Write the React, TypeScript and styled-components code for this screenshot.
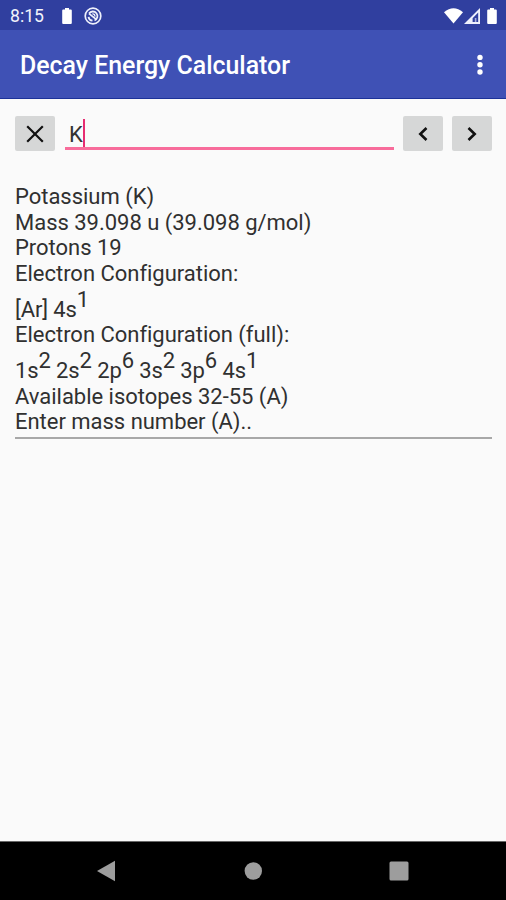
import React from "react";
import styled, { createGlobalStyle } from "styled-components";

const GlobalStyle = createGlobalStyle`
  * { box-sizing: border-box; }
  body { margin: 0; background: #fafafa; font-family: Roboto, "Noto Sans", sans-serif; }
`;

const Screen = styled.div`
  width: 506px;
  height: 900px;
  display: flex;
  flex-direction: column;
  overflow: hidden;
  background: #fafafa;
`;

const StatusBar = styled.header`
  height: 30px;
  flex: none;
  display: flex;
  align-items: center;
  padding: 1px 9px 0 10px;
  background: #303f9f;
  color: #f2f3fb;
`;

const Clock = styled.span`
  width: 52px;
  font-size: 17.6px;
  line-height: 20px;
  padding-top: 1px;
`;

const StatusIcon = styled.svg<{ $gap?: number }>`
  flex: none;
  display: block;
  margin-left: ${(p) => p.$gap ?? 0}px;
`;

const Spacer = styled.div`
  flex: 1;
`;

const AppBar = styled.div`
  height: 69px;
  flex: none;
  display: flex;
  align-items: center;
  justify-content: space-between;
  padding: 0 22px 0 20px;
  background: #3f51b5;
  border-bottom: 1px solid #1c3299;
`;

const Title = styled.h1`
  margin: 4px 0 0;
  color: #fff;
  font-size: 24.9px;
  font-weight: 500;
  line-height: 30px;
  white-space: nowrap;
`;

const MenuButton = styled.button`
  width: 8px;
  height: 24px;
  margin-top: 1px;
  padding: 0;
  border: 0;
  background: none;
`;

const Content = styled.main`
  flex: 1;
  padding: 17px 14px 0 15px;
`;

const SearchRow = styled.div`
  display: flex;
  align-items: flex-start;
`;

const SquareButton = styled.button`
  width: 40px;
  height: 35px;
  flex: none;
  display: grid;
  place-items: center;
  padding: 0;
  border: 0;
  border-radius: 2px;
  background: #d6d7d7;
`;

const Field = styled.div`
  flex: 1;
  height: 34px;
  margin: 0 9px 0 10px;
  padding: 3px 0 0 4px;
  display: flex;
  border-bottom: 3px solid #f86c9b;
  color: #333;
  font-size: 22px;
  line-height: 32px;
`;

const Caret = styled.span`
  width: 2px;
  height: 28px;
  background: #e72d72;
`;

const Pager = styled.div`
  display: flex;
  gap: 9px;
`;

const Report = styled.section`
  margin-top: 32px;
  height: 256px;
  padding-top: 1px;
  border-bottom: 2px solid #a8a8a8;
  color: #303030;
  font-size: 22px;
`;

const Line = styled.div<{ $raised?: boolean }>`
  height: ${(p) => (p.$raised ? 35.6 : 25.7)}px;
  padding-top: ${(p) => (p.$raised ? 9.8 : 0)}px;
  letter-spacing: ${(p) => (p.$raised ? -0.12 : -0.02)}px;
  line-height: 25.7px;
  white-space: nowrap;
`;

const Sup = styled.sup`
  position: relative;
  top: -10px;
  vertical-align: baseline;
  font-size: 22px;
  line-height: 0;
`;

const NavBar = styled.footer`
  height: 59px;
  flex: none;
  display: grid;
  grid-template-columns: 34px 146px 146px 146px 34px;
  align-items: center;
  justify-items: center;
  background: #000;
  border-top: 1px solid #686868;
  & > svg:first-child { grid-column: 2; }
`;

const Orbital = ({ name, count }: { name: string; count: number }) => (
  <>
    {name}
    <Sup>{count}</Sup>
  </>
);

const orbitals: [string, number][] = [
  ["1s", 2], ["2s", 2], ["2p", 6], ["3s", 2], ["3p", 6], ["4s", 1],
];

const Battery = ({ gap }: { gap?: number }) => (
  <StatusIcon $gap={gap} width="10" height="16" viewBox="0 0 10 16">
    <path d="M3 0h4v1.5h1.8q1 0 1 1V15q0 1-1 1H1.2q-1 0-1-1V2.5q0-1 1-1H3z" fill="#fff" />
  </StatusIcon>
);

export default function App() {
  return (
    <>
      <GlobalStyle />
      <Screen>
        <StatusBar>
          <Clock>8:15</Clock>
          <Battery />
          <StatusIcon $gap={12} width="18" height="18" viewBox="0 0 18 18" fill="none" stroke="#eef0fb">
            <circle cx="9" cy="9" r="7.8" strokeWidth="1.7" />
            <path d="M5 6.6A4.6 4.6 0 1 1 10.5 13.4M4.5 9.8a4.6 4.6 0 0 0 4 3.9M5 6.6l7.6 6" strokeWidth="1.8" />
            <path d="M8.3 6.9q2.8-.3 2.6 2.7" strokeWidth="1.4" />
          </StatusIcon>
          <Spacer />
          <StatusIcon width="19" height="16" viewBox="0 0 19 16">
            <path d="M0 4.2Q9.5-3.5 19 4.2L9.5 15.5z" fill="#fff" />
          </StatusIcon>
          <StatusIcon $gap={1} width="16" height="16" viewBox="0 0 16 16">
            <path fillRule="evenodd" d="M16 0v16H0zM14.2 4.5L8.6 10.2V14h5.6z" fill="#eef0fc" />
            <path d="M10.8 10h1.6v4h-1.6z" fill="#a7afdc" />
          </StatusIcon>
          <Battery gap={7} />
        </StatusBar>
        <AppBar>
          <Title>Decay Energy Calculator</Title>
          <MenuButton aria-label="More options">
            <svg width="8" height="24" viewBox="0 0 8 24" fill="#fff" display="block">
              <circle cx="4" cy="4.4" r="2.7" />
              <circle cx="4" cy="11.7" r="2.7" />
              <circle cx="4" cy="19" r="2.7" />
            </svg>
          </MenuButton>
        </AppBar>
        <Content>
          <SearchRow>
            <SquareButton aria-label="Clear">
              <svg width="18" height="18" viewBox="0 0 18 18" fill="none" stroke="#111" strokeWidth="2.2">
                <path d="M1.2 1.2l15.6 15.6M16.8 1.2L1.2 16.8" />
              </svg>
            </SquareButton>
            <Field>
              K<Caret />
            </Field>
            <Pager>
              <SquareButton aria-label="Previous">
                <svg width="10" height="14" viewBox="0 0 10 14" fill="none" stroke="#111" strokeWidth="2.6">
                  <path d="M8.5 1L2.3 7l6.2 6" />
                </svg>
              </SquareButton>
              <SquareButton aria-label="Next">
                <svg width="10" height="14" viewBox="0 0 10 14" fill="none" stroke="#111" strokeWidth="2.6">
                  <path d="M1.5 1l6.2 6-6.2 6" />
                </svg>
              </SquareButton>
            </Pager>
          </SearchRow>
          <Report>
            <Line>Potassium (K)</Line>
            <Line>Mass 39.098 u (39.098 g/mol)</Line>
            <Line>Protons 19</Line>
            <Line>Electron Configuration:</Line>
            <Line $raised>
              [Ar] <Orbital name="4s" count={1} />
            </Line>
            <Line>Electron Configuration (full):</Line>
            <Line $raised>
              {orbitals.map(([name, count]) => (
                <React.Fragment key={name}>
                  <Orbital name={name} count={count} />{" "}
                </React.Fragment>
              ))}
            </Line>
            <Line>Available isotopes 32-55 (A)</Line>
            <Line>Enter mass number (A)..</Line>
          </Report>
        </Content>
        <NavBar>
          <svg width="20" height="22" viewBox="0 0 20 22">
            <path d="M0 11L18 .8v20.4z" fill="#9d9d9d" />
          </svg>
          <svg width="18" height="18" viewBox="0 0 18 18">
            <circle cx="9.3" cy="9" r="8.7" fill="#9d9d9d" />
          </svg>
          <svg width="20" height="20" viewBox="0 0 20 20">
            <rect x=".5" y=".5" width="19" height="19" rx="1.5" fill="#9d9d9d" />
          </svg>
        </NavBar>
      </Screen>
    </>
  );
}
